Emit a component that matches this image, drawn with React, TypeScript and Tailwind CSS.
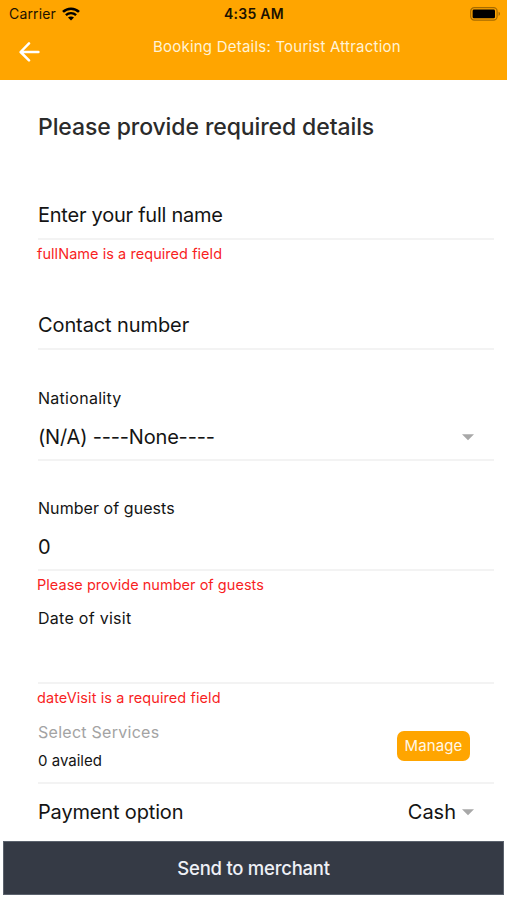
function BackArrow() {
  return (
    <svg width="21" height="20" viewBox="0 0 21 20" fill="none" stroke="#fff" strokeWidth="2.5" strokeLinecap="round" strokeLinejoin="round">
      <path d="M19.4 10H1.8M10 1.4L1.6 10L10 18.4" />
    </svg>
  );
}

function Wifi() {
  return (
    <svg width="18" height="14" viewBox="0 0 18 14" fill="none" stroke="#000">
      <path d="M1 4.9C5.4 0.6 12.6 0.6 17 4.9" strokeWidth="2.6" />
      <path d="M3.9 8.1C6.8 5.4 11.2 5.4 14.1 8.1" strokeWidth="2.4" />
      <path d="M9 13.4L6 10.5C7.6 9 10.4 9 12 10.5Z" fill="#000" stroke="none" />
    </svg>
  );
}

function Battery() {
  return (
    <svg width="31" height="14" viewBox="0 0 31 14">
      <rect x="0.7" y="0.7" width="26.4" height="12.4" rx="3.6" fill="none" stroke="#000" strokeOpacity="0.35" strokeWidth="1.2" />
      <rect x="2.6" y="2.5" width="22.4" height="8.8" rx="1.4" fill="#000" />
      <path d="M28.6 4.8C30.4 5.5 30.4 8.3 28.6 9Z" fill="#000" fillOpacity="0.4" />
    </svg>
  );
}

function Caret() {
  return (
    <svg width="12" height="7" viewBox="0 0 12 7">
      <path d="M0 0.2H12L6 6.2Z" fill="#a8a8a8" />
    </svg>
  );
}

function Line() {
  return <div className="h-[2px] bg-[#f3f3f3]" />;
}

export default function App() {
  return (
    <div className="flex h-[900px] w-[507px] flex-col overflow-hidden bg-white font-['Inter',sans-serif] text-[#141414]">
      <header className="h-20 shrink-0 bg-[#ffa500]">
        {/* Status bar */}
        <div className="grid h-[27px] grid-cols-3 items-center pr-[6px] pl-[9px] text-[14px] text-[#1c1200]">
          <div className="flex items-center gap-[6px]">
            <span className="tracking-[0.15px]">Carrier</span>
            <Wifi />
          </div>
          <span className="pr-[2px] text-center font-semibold tracking-[0.25px]">4:35 AM</span>
          <div className="flex justify-end"><Battery /></div>
        </div>

        {/* Nav bar */}
        <div className="flex h-[40px] items-center">
          <button className="mt-[10px] ml-[18.5px] text-white"><BackArrow /></button>
          <h1 className="ml-[113.5px] text-[15px] tracking-[0.22px] whitespace-nowrap text-[#fff3d6]">Booking Details: Tourist Attraction</h1>
        </div>
      </header>

      <main className="h-[760px] shrink-0 overflow-hidden pr-[13px] pl-[38px]">
        <h2 className="mt-[32px] flex h-[30px] items-center text-[23px] font-medium tracking-[-0.1px] text-[#2b2b2b]">Please provide required details</h2>

        <div className="mt-[58px]">
          <div className="flex h-[30px] items-center text-[20px] tracking-[-0.24px]">Enter your full name</div>
          <div className="h-[8px]" />
          <Line />
          <p className="-ml-px mt-[4px] flex h-[20px] items-center text-[14.5px] tracking-[0.05px] text-[#f81f1f]">fullName is a required field</p>
        </div>

        <div className="mt-[46px]">
          <div className="flex h-[30px] items-center text-[20px] tracking-[-0.1px]">Contact number</div>
          <div className="h-[8px]" />
          <Line />
        </div>

        <div className="mt-[38px]">
          <label className="flex h-[20px] items-center text-[16px] tracking-[0.28px]">Nationality</label>
          <div className="mt-[14px] flex h-[30px] items-center justify-between pr-[20px] text-[20px]">
            <span className="tracking-[-0.18px]">(N/A) ----None----</span>
            <Caret />
          </div>
          <div className="h-[7px]" />
          <Line />
        </div>

        <div className="mt-[37px]">
          <label className="flex h-[20px] items-center text-[16px] tracking-[0.06px]">Number of guests</label>
          <div className="mt-[14px] flex h-[30px] items-center text-[20px]">0</div>
          <div className="h-[7px]" />
          <Line />
          <p className="-ml-px mt-[4px] flex h-[20px] items-center text-[14.5px] tracking-[0.03px] text-[#f81f1f]">Please provide number of guests</p>
        </div>

        <div className="mt-[13px]">
          <label className="flex h-[20px] items-center text-[16px] tracking-[0.28px]">Date of visit</label>
          <div className="h-[54px]" />
          <Line />
          <p className="-ml-px mt-[4px] flex h-[20px] items-center text-[14.5px] tracking-[0.08px] text-[#f81f1f]">dateVisit is a required field</p>
        </div>

        {/* Services */}
        <div className="mt-[13px] flex items-start justify-between pr-[24px]">
          <div>
            <p className="flex h-[22px] items-center text-[16px] tracking-[0.27px] text-[#a3a3a3]">Select Services</p>
            <p className="mt-[7px] flex h-[22px] items-center text-[15px]">0 availed</p>
          </div>
          <button className="mt-[10px] flex h-[30px] w-[73px] items-center justify-center rounded-[7px] bg-[#ffa500] pt-px text-[15px] tracking-[0.1px] text-[#fff8e8]">Manage</button>
        </div>
        <div className="h-[10px]" />
        <Line />

        <div className="mt-[13px] flex h-[30px] items-center justify-between pr-[20px] text-[20px]">
          <span className="tracking-[-0.16px]">Payment option</span>
          <div className="flex items-center gap-[6px]">
            <span>Cash</span>
            <Caret />
          </div>
        </div>
      </main>

      <button className="mx-[3px] mt-[1px] h-[54px] shrink-0 border border-[#5b626d] bg-[#353a45] pt-[2px] text-[18.5px] font-medium tracking-[-0.25px] text-[#eef0f6]">Send to merchant</button>
    </div>
  );
}
